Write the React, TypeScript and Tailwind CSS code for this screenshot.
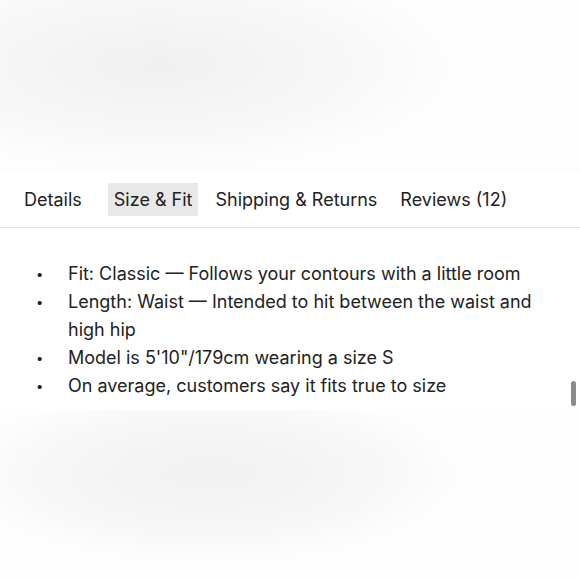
const tabs = ['Details', 'Size & Fit', 'Shipping & Returns', 'Reviews (12)'];

const fitNotes = [
  'Fit: Classic — Follows your contours with a little room',
  'Length: Waist — Intended to hit between the waist and high hip',
  'Model is 5\'10"/179cm wearing a size S',
  'On average, customers say it fits true to size',
];

export default function App() {
  return (
    <div className="w-[580px] h-[580px] overflow-hidden bg-white text-[#222] font-['Inter','Liberation_Sans',sans-serif] flex flex-col">
      {/* blurred product image above */}
      <div className="h-[172px] shrink-0 bg-[radial-gradient(ellipse_50%_60%_at_27%_38%,#f0f0f0_0%,#f4f4f4_35%,#f8f8f8_70%,#fdfdfd_100%)]" />

      <div className="h-[56px] shrink-0 flex items-center border-b border-[#e6e6e6] px-[18px] gap-[11px] text-[18px]">
        {tabs.map((tab, i) => (
          <button
            key={tab}
            type="button"
            className={`h-[33px] px-[6px] leading-none ${i === 1 ? 'bg-[#e8e8e8] ml-[9px]' : ''}`}
          >
            {tab}
          </button>
        ))}
      </div>

      <div className="relative flex-1 flex flex-col">
        <ul className="pt-[32px] pb-[4px] pl-[36px] pr-[40px] text-[18px] leading-[28px]">
          {fitNotes.map((note) => (
            <li key={note} className="flex">
              <span className="w-[32px] shrink-0 text-[13px]">•</span>
              <span>{note}</span>
            </li>
          ))}
        </ul>
        <div className="absolute right-[4px] top-[153px] w-[5px] h-[25px] rounded-full bg-[#8a8a8a]" />
        <div className="flex-1 mt-[6px] bg-[radial-gradient(ellipse_42%_50%_at_36%_38%,#f1f1f1_0%,#f4f4f4_40%,#f8f8f8_75%,#fdfdfd_100%)]" />
      </div>
    </div>
  );
}
